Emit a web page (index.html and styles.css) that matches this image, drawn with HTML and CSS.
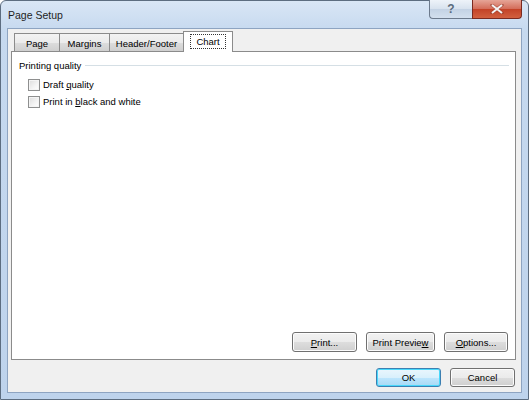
FILE: index.html
```html
<!DOCTYPE html>
<html>
<head>
<meta charset="utf-8">
<link rel="stylesheet" href="styles.css">
</head>
<body>
<div class="window">
  <div class="titlebar">
    <span class="title">Page Setup</span>
    <div class="caption-btns">
      <div class="cap help">?</div>
      <div class="cap close">
        <svg width="14" height="10" viewBox="0 0 14 10"><path d="M2 1 L12 9 M12 1 L2 9" stroke="#8a3a2c" stroke-width="3.4" stroke-linecap="square" opacity="0.5"/><path d="M2 1 L12 9 M12 1 L2 9" stroke="#f4f4f4" stroke-width="2"/></svg>
      </div>
    </div>
  </div>
  <div class="client">
    <div class="tabs">
      <div class="tab tab-page">Page</div>
      <div class="tab tab-margins">Margins</div>
      <div class="tab tab-hf">Header/Footer</div>
      <div class="tab tab-chart selected"><span class="focus">Chart</span></div>
    </div>
    <div class="panel">
      <div class="group">
        <div class="group-head"><span>Printing quality</span><div class="rule"></div></div>
        <label class="check"><span class="box"></span><span>Draft <u>q</u>uality</span></label>
        <label class="check"><span class="box"></span><span>Print in <u>b</u>lack and white</span></label>
      </div>
      <div class="panel-btns">
        <div class="btn b-print"><u>P</u>rint...</div>
        <div class="btn b-preview">Print Previe<u>w</u></div>
        <div class="btn b-options"><u>O</u>ptions...</div>
      </div>
    </div>
    <div class="dialog-btns">
      <div class="btn b-ok default">OK</div>
      <div class="btn b-cancel">Cancel</div>
    </div>
  </div>
</div>
</body>
</html>
```
FILE: styles.css
```css
html, body {
  margin: 0;
  padding: 0;
  background: #ffffff;
}
body {
  font-family: "Liberation Sans", Arial, sans-serif;
  font-size: 9.5px;
  color: #000;
}
.window {
  box-sizing: border-box;
  width: 529px;
  height: 400px;
  border: 1px solid #5d6d80;
  border-radius: 6px 6px 0 0;
  background: linear-gradient(to bottom, #d9e6f5 0px, #c6d9ef 30px, #bed3ec 100%);
  display: flex;
  flex-direction: column;
  padding: 0 6px 6px 6px;
}
.titlebar {
  height: 27px;
  display: flex;
  align-items: flex-start;
  justify-content: space-between;
}
.title {
  font-family: "Liberation Sans", Arial, sans-serif;
  font-size: 10.5px;
  margin-top: 8px;
  margin-left: 1px;
  color: #1e1e1e;
}
.caption-btns {
  display: flex;
  margin-top: -1px;
}
.cap {
  height: 19px;
  box-sizing: border-box;
  border: 1px solid #6c7a8c;
  border-top: none;
  display: flex;
  align-items: center;
  justify-content: center;
}
.help {
  width: 43px;
  border-radius: 0 0 0 4px;
  background: linear-gradient(to bottom, #eef3f9 0%, #d7e2ee 50%, #c3d2e4 51%, #d3e0ee 100%);
  color: #5a6a7c;
  font-weight: bold;
  font-size: 12px;
  border-right: none;
}
.close {
  width: 50px;
  border-radius: 0 0 4px 0;
  border-color: #7b2a20;
  background: linear-gradient(to bottom, #e6a597 0%, #d36b58 50%, #c34227 51%, #d2603f 100%);
}
.client {
  flex: 1;
  background: #f0f0f0;
  border: 1px solid #8ea4c1;
  padding: 2px 5px 0 3px;
  display: flex;
  flex-direction: column;
}
.tabs {
  display: flex;
  align-items: flex-end;
  padding-left: 2px;
  height: 20px;
  position: relative;
  z-index: 1;
}
.tab {
  box-sizing: border-box;
  height: 18px;
  border: 1px solid #8b8b8b;
  border-bottom: none;
  background: linear-gradient(to bottom, #f3f3f3 0%, #ebebeb 50%, #dddddd 51%, #cfcfcf 100%);
  display: flex;
  align-items: center;
  justify-content: center;
  margin-right: -1px;
  padding-top: 1px;
}
.tab-page { width: 46px; margin-left: 1px; }
.tab-margins { width: 51px; }
.tab-hf { width: 75px; }
.tab.selected {
  width: 50px;
  height: 21px;
  margin-bottom: -1px;
  background: #ffffff;
  align-items: flex-start;
  padding-top: 2px;
}
.focus {
  border: 1px dotted #333;
  padding: 1px 5px 1px 5px;
}
.panel {
  box-sizing: border-box;
  height: 309px;
  background: #ffffff;
  border: 1px solid #8b8b8b;
  display: flex;
  flex-direction: column;
  justify-content: space-between;
  padding: 6px 6px 7px 7px;
}
.group-head {
  display: flex;
  align-items: center;
  gap: 4px;
  height: 14px;
}
.rule {
  flex: 1;
  height: 0;
  border-top: 1px solid #d5dfe5;
  margin-top: 1px;
}
.check {
  display: flex;
  align-items: center;
  gap: 3px;
  margin-left: 9px;
  height: 13px;
}
.group-head + .check { margin-top: 6px; }
.check + .check { margin-top: 4px; }
.box {
  box-sizing: border-box;
  width: 12px;
  height: 12px;
  border: 1px solid #8e8f8f;
  background: linear-gradient(135deg, #dcdcdc 0%, #f4f4f4 60%, #ffffff 100%);
  box-shadow: inset 0 0 0 1px #f4f4f4;
}
u { text-decoration: underline; text-underline-offset: 1px; }
.panel-btns {
  display: flex;
  justify-content: flex-end;
  gap: 9px;
  padding-right: 1px;
}
.btn {
  box-sizing: border-box;
  height: 20px;
  border: 1px solid #707070;
  border-radius: 3px;
  background: linear-gradient(to bottom, #f2f2f2 0%, #ebebeb 50%, #dddddd 51%, #cfcfcf 100%);
  display: flex;
  align-items: center;
  justify-content: center;
  box-shadow: inset 0 0 0 1px #fcfcfc;
}
.b-print { width: 65px; }
.b-preview { width: 69px; }
.b-options { width: 64px; }
.dialog-btns {
  display: flex;
  justify-content: flex-end;
  gap: 9px;
  padding-top: 8px;
  padding-right: 1px;
}
.b-ok, .b-cancel { width: 65px; height: 19px; }
.default {
  border-color: #3c7fb1;
  box-shadow: inset 0 0 0 1px #48d8fb;
  background: linear-gradient(to bottom, #eaf6fd 0%, #d9f0fc 50%, #bee6fd 51%, #a7d9f5 100%);
}
```
